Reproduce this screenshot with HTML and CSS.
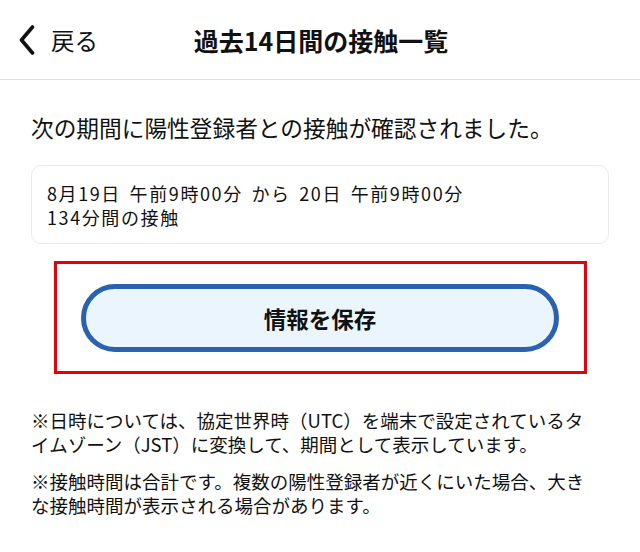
FILE: index.html
```html
<html>

<head>
  <meta charset="utf8">
  <title>過去14日間の接触一覧</title>
  <meta name="viewport" content="width=device-width, initial-scale=1.0, user-scalable=no">
  <link rel="stylesheet" href="styles.css">
</head>

<body>
  <section class="screen">
    <div class="header">
      <a class="back">
        <svg class="back-icon" width="16" height="30" viewBox="0 0 16 30">
          <polyline points="13.5,2 2.5,15 13.5,28" fill="none" stroke="#111" stroke-width="3.6" stroke-linecap="round" stroke-linejoin="round" />
        </svg>
        <span class="back-label">戻る</span>
      </a>
      <h1 class="title">過去14日間の接触一覧</h1>
      <div class="spacer"></div>
    </div>
    <section class="content">
      <p class="lead">次の期間に陽性登録者との接触が確認されました。</p>
      <div class="period">
        <div class="period-range">8月19日 午前9時00分 から 20日 午前9時00分</div>
        <div class="period-total">134分間の接触</div>
      </div>
      <div class="highlight">
        <button class="save-btn">情報を保存</button>
      </div>
      <div class="notes">
        <p class="note">※日時については、協定世界時（UTC）を端末で設定されているタイムゾーン（JST）に変換して、期間として表示しています。</p>
        <p class="note">※接触時間は合計です。複数の陽性登録者が近くにいた場合、大きな接触時間が表示される場合があります。</p>
      </div>
    </section>
  </section>
</body>

</html>
```

FILE: styles.css
```css
* {
  margin: 0;
  padding: 0;
  box-sizing: border-box;
}

body {
  font-family: "Noto Sans CJK JP", "Noto Sans", sans-serif;
  color: #111;
  background: #fff;
}

.header {
  display: grid;
  grid-template-columns: 1fr auto 1fr;
  align-items: center;
  height: 80px;
  border-bottom: 1px solid #dedede;
}

.back {
  display: flex;
  align-items: center;
  padding-left: 19px;
}

.back-icon {
  display: block;
}

.back-label {
  margin-left: 16px;
  font-size: 23.5px;
}

.title {
  font-size: 25px;
  font-weight: bold;
  padding-left: 2px;
}

.content {
  padding: 0 31px;
}

.lead {
  margin-top: 31px;
  font-size: 22.7px;
  line-height: 34px;
}

.period {
  margin-top: 20px;
  padding: 15px 15px 14px;
  border: 1px solid #e9e9e9;
  border-radius: 10px;
  font-size: 18px;
  line-height: 24px;
  letter-spacing: 1.6px;
  word-spacing: 3px;
}

.highlight {
  margin: 17px 22px 0 23px;
  padding: 20px 25px 19px 24px;
  border: 3px solid #e5000a;
}

.save-btn {
  display: block;
  width: 100%;
  height: 68px;
  border: 5px solid #2b62ad;
  border-radius: 34px;
  background: #eaf5fe;
  font-family: inherit;
  font-size: 22.5px;
  font-weight: bold;
  color: #111;
}

.notes {
  margin-top: 34px;
  width: 566px;
  font-size: 18.5px;
  line-height: 24px;
}

.note {
  margin-bottom: 13px;
}
```
